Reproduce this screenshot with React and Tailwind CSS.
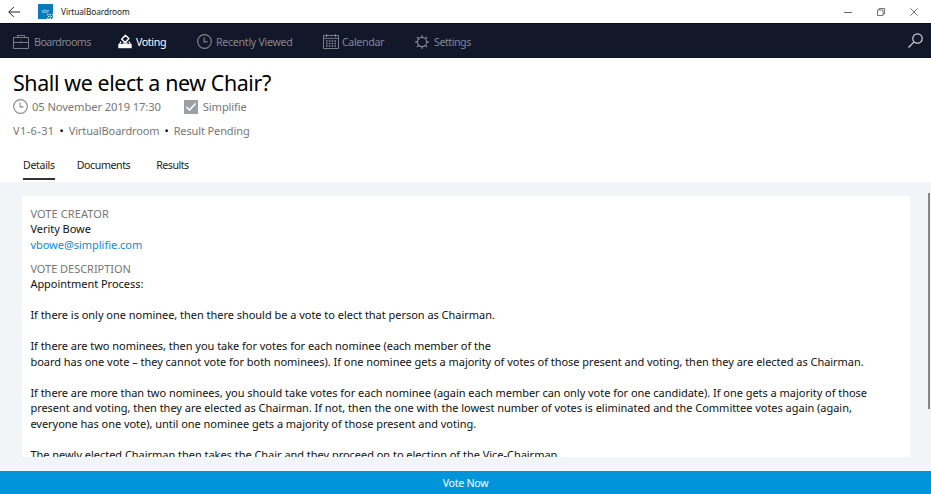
import { useState } from "react";

const paragraphs = [
  ["Appointment Process:"],
  ["If there is only one nominee, then there should be a vote to elect that person as Chairman."],
  [
    "If there are two nominees, then you take for votes for each nominee (each member of the",
    "board has one vote – they cannot vote for both nominees). If one nominee gets a majority of votes of those present and voting, then they are elected as Chairman.",
  ],
  [
    "If there are more than two nominees, you should take votes for each nominee (again each member can only vote for one candidate). If one gets a majority of those",
    "present and voting, then they are elected as Chairman. If not, then the one with the lowest number of votes is eliminated and the Committee votes again (again,",
    "everyone has one vote), until one nominee gets a majority of those present and voting.",
  ],
  ["The newly elected Chairman then takes the Chair and they proceed on to election of the Vice-Chairman."],
];

function Icon({ className, children, viewBox = "0 0 16 16" }) {
  return (
    <svg className={`shrink-0 ${className}`} viewBox={viewBox} fill="none" stroke="currentColor">
      {children}
    </svg>
  );
}

function ClockIcon({ className }) {
  return (
    <Icon className={className}>
      <circle cx="8" cy="8" r="7.3" strokeWidth="1.2" />
      <path d="M7.6 3.6V8.4H11.2" strokeWidth="1.2" />
    </Icon>
  );
}

function BriefcaseIcon() {
  return (
    <Icon className="w-4 h-[14px]" viewBox="0 0 16 14">
      <path d="M.5 2.5h15v11H.5zM4.5 2.5V.5h7v2M.5 7.5h15M8 6v1" strokeWidth=".9" />
    </Icon>
  );
}

function BallotIcon() {
  return (
    <Icon className="w-[14px] h-[15px]" viewBox="0 0 14 15">
      <path d="M7.4 1.2 10.9 4.6 7.3 8.4 3.7 5.2z" strokeWidth="1.4" strokeLinejoin="round" />
      <path d="M3.2 7.6 1.2 10.6h11.6l-2-3M4.8 9.2h4.8" strokeWidth="1.2" />
      <path d="M.3 10.4h13.4v3.8H.3z" fill="currentColor" stroke="none" />
    </Icon>
  );
}

function CalendarIcon() {
  return (
    <Icon className="w-4 h-[15px]" viewBox="0 0 16 15">
      <path d="M.5 1.5h15v13H.5zM.5 4.3h15M3.5 0v3M12.5 0v3" strokeWidth=".9" />
      <path d="M3 7h10M3 9.5h10M3 12h10" strokeWidth="1.3" strokeDasharray="1.6 1.2" />
    </Icon>
  );
}

function GearIcon() {
  return (
    <Icon className="w-[14px] h-[14px]" viewBox="0 0 14 14">
      <circle cx="7" cy="7" r="4.6" strokeWidth="1.1" />
      <path d="M7 2.4V.2M7 13.8v-2.2M2.4 7H.2M13.8 7h-2.2M3.7 3.7 2 2M10.3 3.7 12 2M3.7 10.3 2 12M10.3 10.3 12 12" strokeWidth="1.3" />
    </Icon>
  );
}

function TitleBar() {
  return (
    <div className="h-[23px] shrink-0 flex items-center bg-white text-[#222]">
      <Icon className="w-3 h-3 ml-2" viewBox="0 0 12 12">
        <path d="M12 6H.8M5.8 1 .8 6l5 5" />
      </Icon>
      <svg className="w-[15px] h-[15px] ml-[18px]" viewBox="0 0 15 15">
        <path d="M0 0h15v15H0z" fill="#0c78bd" />
        <text x="3.5" y="9" fontSize="5" fill="#d3e8f5">vbr</text>
        <path d="M9 10.7h6M10 12.5h5M9 14.3h6" stroke="#d3e8f5" strokeWidth="1.2" strokeDasharray="1.5 1" />
      </svg>
      <span className="ml-[8px] pt-px text-[8.3px] tracking-[-0.08px]">VirtualBoardroom</span>
      <div className="ml-auto flex items-center pr-[13px] text-[#555]">
        <Icon className="w-2 h-2 mr-[25px]" viewBox="0 0 8 8">
          <path d="M0 4.5h8" strokeWidth=".9" />
        </Icon>
        <Icon className="w-2 h-2 mr-[25px]" viewBox="0 0 8 8">
          <path d="M.5 2h5.5v5.5H.5zM2 2V.5h5.5V6H6" strokeWidth=".8" />
        </Icon>
        <Icon className="w-2 h-2" viewBox="0 0 8 8">
          <path d="m.3.3 7.4 7.4M7.7.3.3 7.7" strokeWidth=".8" />
        </Icon>
      </div>
    </div>
  );
}

function NavBar() {
  return (
    <nav className="h-[35px] shrink-0 flex items-center pt-[2px] bg-[#12172a] border-t border-[#050a22] text-[10.7px] text-[#84868f]">
      <div className="flex items-center gap-[5px] pl-[13px] w-[118px]">
        <BriefcaseIcon />
        <span className="tracking-[-0.56px]">Boardrooms</span>
      </div>
      <div className="flex items-center gap-[4px] w-[79px] text-white">
        <BallotIcon />
        <span className="tracking-[-0.4px]">Voting</span>
      </div>
      <div className="flex items-center gap-[4px] w-[126px]">
        <ClockIcon className="w-[15px] h-[15px]" />
        <span className="tracking-[-0.32px]">Recently Viewed</span>
      </div>
      <div className="flex items-center gap-[3px] w-[92px]">
        <CalendarIcon />
        <span className="tracking-[-0.38px]">Calendar</span>
      </div>
      <div className="flex items-center gap-[5px]">
        <GearIcon />
        <span className="tracking-[-0.48px]">Settings</span>
      </div>
      <Icon className="w-[15px] h-[15px] ml-auto mr-2 mb-[3px] text-[#d0d1d5]" viewBox="0 0 15 15">
        <circle cx="9.5" cy="5.5" r="4.7" strokeWidth="1.2" />
        <path d="M6.1 8.9.5 14.5" strokeWidth="1.2" />
      </Icon>
    </nav>
  );
}

const tabs = [
  { name: "Details", style: "mr-[22px] tracking-[-0.32px]" },
  { name: "Documents", style: "mr-[26px] tracking-[-0.4px]" },
  { name: "Results", style: "tracking-[-0.5px]" },
];

function Tabs({ active, onSelect }) {
  return (
    <div className="flex mt-[18px] ml-[10px] text-[10.6px] text-[#222] leading-[16px]">
      {tabs.map(({ name, style }) => (
        <button
          key={name}
          onClick={() => onSelect(name)}
          className={`h-[23px] flex items-start border-b-2 ${style} ${
            active === name ? "border-[#333]" : "border-transparent"
          }`}
        >
          {name}
        </button>
      ))}
    </div>
  );
}

export default function App() {
  const [tab, setTab] = useState("Details");

  return (
    <div className="w-full h-screen flex flex-col overflow-hidden bg-[#f1f5f8] font-['Noto_Sans',sans-serif] whitespace-nowrap">
      <TitleBar />
      <NavBar />

      {/* VOTE HEADER */}
      <header className="h-[124px] shrink-0 bg-white pl-[13px] pt-[9px] text-[#777]">
        <h1 className="text-[21.4px] leading-[32px] tracking-[-0.39px] text-black">Shall we elect a new Chair?</h1>
        <div className="flex items-center h-4 text-[11.2px]">
          <ClockIcon className="w-[15px] h-[15px] -mt-px text-[#888]" />
          <span className="ml-1 tracking-[-0.1px]">05 November 2019 17:30</span>
          <svg className="w-[14px] h-[14px] ml-[23px] -mt-px" viewBox="0 0 14 14">
            <path d="M0 0h14v14H0z" fill="#9b9fa6" />
            <path d="m2.5 7 3 3 6-6.5" fill="none" stroke="#fff" strokeWidth="1.6" />
          </svg>
          <span className="ml-[5px] tracking-[-0.15px]">Simplifie</span>
        </div>
        <div className="flex items-center gap-[5px] mt-[8px] h-4 text-[11px]">
          <span className="tracking-[0.38px]">V1-6-31</span>
          <span className="text-black">•</span>
          <span className="tracking-[-0.12px]">VirtualBoardroom</span>
          <span className="text-black">•</span>
          <span className="tracking-[-0.12px]">Result Pending</span>
        </div>
        <Tabs active={tab} onSelect={setTab} />
      </header>

      {/* VOTE DETAILS */}
      <main className="flex-1 min-h-0 flex pl-[22px] pt-[11px]">
        <section className="w-[888px] h-[261px] mt-[3px] overflow-hidden bg-white pl-[8.4px] pt-[9.9px] text-[11px] leading-[15.48px] tracking-[-0.03px] text-[#111]">
          <p className="text-[#777] tracking-[0.1px]">VOTE CREATOR</p>
          <p>Verity Bowe</p>
          <p className="text-[#0c8cdd]">vbowe@simplifie.com</p>
          <p className="text-[#777] mt-[8.5px]">VOTE DESCRIPTION</p>
          <div className="space-y-[15.5px]">
            {paragraphs.map((lines) => (
              <p key={lines[0]}>
                {lines.map((line) => (
                  <span key={line} className="block">{line}</span>
                ))}
              </p>
            ))}
          </div>
        </section>
        <div className="ml-auto mr-[1px] w-[2px] h-[216px] bg-[#868686]" />
      </main>

      <button className="h-[23px] shrink-0 pt-[2px] bg-[#0095db] text-white text-[10.6px] tracking-[-0.25px]">Vote Now</button>
    </div>
  );
}
